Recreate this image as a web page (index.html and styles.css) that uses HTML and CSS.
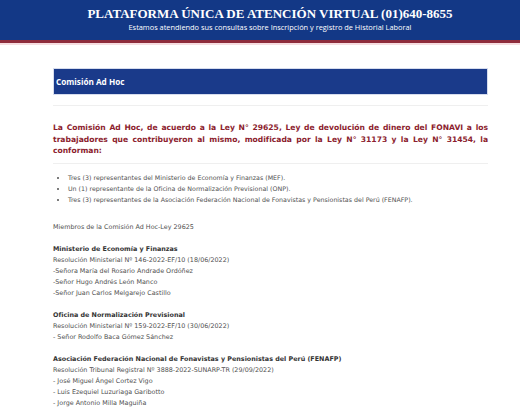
FILE: index.html
```html
<!DOCTYPE html>
<html lang="es">
<head>
<meta charset="utf-8">
<title>Comisión Ad Hoc</title>
<link rel="stylesheet" href="styles.css">
</head>
<body>
<header class="top">
  <h1 class="top-title">PLATAFORMA ÚNICA DE ATENCIÓN VIRTUAL (01)640-8655</h1>
  <p class="top-sub">Estamos atendiendo sus consultas sobre Inscripción y registro de Historial Laboral</p>
</header>
<div class="stripe"></div>
<main class="content">
  <div class="panel"><h2 class="panel-title">Comisión Ad Hoc</h2></div>
  <hr class="rule rule-a">
  <p class="lead">La Comisión Ad Hoc, de acuerdo a la Ley N° 29625, Ley de devolución de dinero del FONAVI a los trabajadores que contribuyeron al mismo, modificada por la Ley N° 31173 y la Ley N° 31454, la conforman:</p>
  <hr class="rule rule-b">
  <ul class="reps">
    <li>Tres (3) representantes del Ministerio de Economía y Finanzas (MEF).</li>
    <li>Un (1) representante de la Oficina de Normalización Previsional (ONP).</li>
    <li>Tres (3) representantes de la Asociación Federación Nacional de Fonavistas y Pensionistas del Perú (FENAFP).</li>
  </ul>
  <p class="txt intro">Miembros de la Comisión Ad Hoc-Ley 29625</p>
  <section class="group">
    <p class="txt org">Ministerio de Economía y Finanzas</p>
    <p class="txt">Resolución Ministerial Nº 146-2022-EF/10 (18/06/2022)</p>
    <p class="txt">-Señora María del Rosario Andrade Ordóñez</p>
    <p class="txt">-Señor Hugo Andrés León Manco</p>
    <p class="txt">-Señor Juan Carlos Melgarejo Castillo</p>
  </section>
  <section class="group">
    <p class="txt org">Oficina de Normalización Previsional</p>
    <p class="txt">Resolución Ministerial Nº 159-2022-EF/10 (30/06/2022)</p>
    <p class="txt">- Señor Rodolfo Baca Gómez Sánchez</p>
  </section>
  <section class="group">
    <p class="txt org">Asociación Federación Nacional de Fonavistas y Pensionistas del Perú (FENAFP)</p>
    <p class="txt">Resolución Tribunal Registral Nº 3888-2022-SUNARP-TR (29/09/2022)</p>
    <p class="txt">- José Miguel Ángel Cortez Vigo</p>
    <p class="txt">- Luis Ezequiel Luzuriaga Garibotto</p>
    <p class="txt">- Jorge Antonio Milla Maguiña</p>
  </section>
</main>
</body>
</html>
```
FILE: styles.css
```css
html, body {
  margin: 0;
  padding: 0;
  background: #ffffff;
}
body {
  font-family: "DejaVu Sans", Verdana, sans-serif;
  color: #505050;
  overflow: hidden;
}
.top {
  background: #133886;
  height: 40px;
  padding-left: 20px;
  display: flex;
  flex-direction: column;
  align-items: center;
  color: #ffffff;
}
.top-title {
  margin: 6px 0 0;
  font-family: "Liberation Serif", "Times New Roman", serif;
  font-weight: bold;
  font-size: 13px;
  line-height: 15px;
  letter-spacing: 0;
}
.top-sub {
  margin: 2px 0 0;
  font-family: "Open Sans", sans-serif;
  font-size: 7.4px;
  line-height: 9px;
}
.stripe {
  height: 3px;
  background: #8e2c3c;
  border-bottom: 2px solid #f6dde0;
}
.content {
  margin: 23px 32px 0 53px;
}
.panel {
  background: #1a3a8a;
  height: 27px;
  display: flex;
  align-items: center;
  border: 1px solid #d6dced;
  box-sizing: border-box;
}
.panel-title {
  margin: 0 0 0 2px;
  color: #ffffff;
  font-family: "Open Sans", sans-serif;
  font-weight: bold;
  font-size: 8.2px;
}
.rule {
  border: 0;
  border-top: 1px solid #efefef;
  margin: 0;
}
.rule-a { margin-top: 10px; }
.lead {
  margin: 16px 0 0;
  color: #8c1d2e;
  font-weight: bold;
  font-size: 7.6px;
  line-height: 11.5px;
  text-align: justify;
}
.rule-b { margin-top: 6px; }
.reps {
  margin: 8px 0 0;
  padding-left: 15px;
  font-size: 6.3px;
  line-height: 11px;
}
.txt {
  margin: 0;
  font-size: 6.4px;
  line-height: 11px;
}
.intro { margin-top: 17px; }
.group { margin-top: 11px; }
.org {
  font-weight: bold;
  color: #333333;
}
```
